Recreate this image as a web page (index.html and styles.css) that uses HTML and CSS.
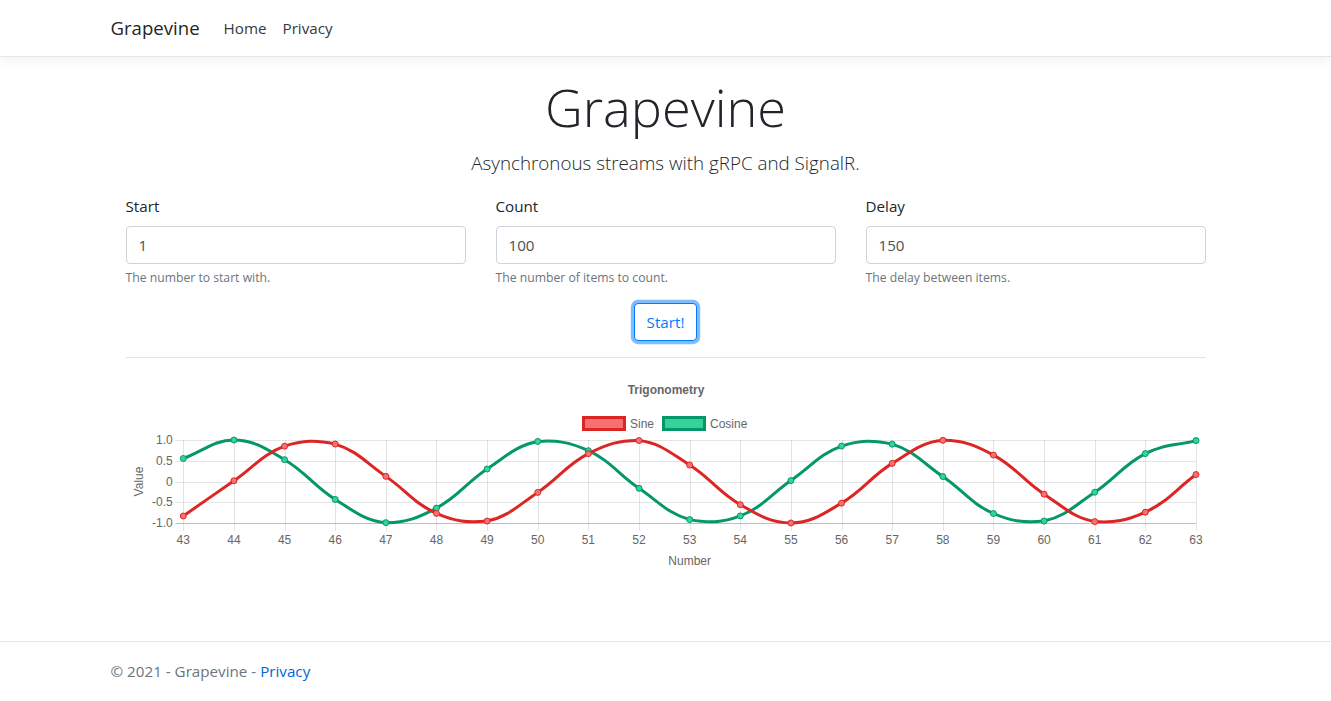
FILE: index.html
```html
<!DOCTYPE html>
<html lang="en">
<head>
<meta charset="utf-8">
<title>Grapevine</title>
<link rel="stylesheet" href="styles.css">
</head>
<body>
<header>
  <nav class="navbar">
    <div class="container nav-inner">
      <a class="brand" href="#">Grapevine</a>
      <ul class="nav-links">
        <li><a class="nav-link" href="#">Home</a></li>
        <li><a class="nav-link" href="#">Privacy</a></li>
      </ul>
    </div>
  </nav>
</header>
<div class="container page">
  <main class="inner">
    <div class="hero">
      <h1 class="display">Grapevine</h1>
      <p class="lead">Asynchronous streams with gRPC and SignalR.</p>
    </div>
    <form class="fields">
      <div class="field">
        <label for="start">Start</label>
        <input id="start" class="form-control" type="text" value="1">
        <small class="form-text">The number to start with.</small>
      </div>
      <div class="field">
        <label for="count">Count</label>
        <input id="count" class="form-control" type="text" value="100">
        <small class="form-text">The number of items to count.</small>
      </div>
      <div class="field">
        <label for="delay">Delay</label>
        <input id="delay" class="form-control" type="text" value="150">
        <small class="form-text">The delay between items.</small>
      </div>
    </form>
    <div class="actions"><button class="btn" type="button">Start!</button></div>
    <hr class="divider">
    <svg id="chart" class="chart" width="1080" height="200" viewBox="0 0 1080 200" xmlns="http://www.w3.org/2000/svg">
      <g id="grid"></g>
      <g class="chart-text">
        <text class="chart-title" x="540" y="20" text-anchor="middle">Trigonometry</text>
        <rect x="457.5" y="43.5" width="41" height="12" fill="#f87171" stroke="#dc2626" stroke-width="3"></rect>
        <text x="504" y="54">Sine</text>
        <rect x="537.5" y="43.5" width="41" height="12" fill="#34d399" stroke="#059669" stroke-width="3"></rect>
        <text x="584" y="54">Cosine</text>
        <text x="17" y="107.5" text-anchor="middle" transform="rotate(-90 17 107.5)">Value</text>
        <text x="563.7" y="191" text-anchor="middle">Number</text>
      </g>
      <g id="labels" class="chart-text"></g>
      <g id="series"></g>
    </svg>
  </main>
</div>
<footer class="footer">
  <div class="container">© 2021 - Grapevine - <a href="#">Privacy</a></div>
</footer>
<script src="app.js"></script>
</body>
</html>
```

FILE: styles.css
```css
* { box-sizing: border-box; }
html { font-size: 16px; }
body {
  margin: 0;
  min-height: 100vh;
  display: flex;
  flex-direction: column;
  font-family: "Open Sans", "Noto Sans", "Liberation Sans", sans-serif;
  font-size: 15.2px;
  line-height: 24px;
  color: #212529;
  background: #fff;
}
a { text-decoration: none; }
.container {
  width: 100%;
  max-width: 1140px;
  margin: 0 auto;
  padding: 0 15px;
}
.navbar {
  border-bottom: 1px solid #e5e5e5;
  box-shadow: 0 .25rem .75rem rgba(0,0,0,.05);
  padding: 8px 0;
  margin-bottom: 16px;
  background: #fff;
}
.nav-inner { display: flex; align-items: center; }
.brand {
  font-size: 18.6px;
  line-height: 30px;
  padding: 5px 0;
  margin-right: 16px;
  color: #212529;
}
.nav-links { display: flex; list-style: none; margin: 0; padding: 0; }
.nav-link { display: block; padding: 8px; color: #343a40; line-height: 24px; }
.page { flex: 1 0 auto; padding-bottom: 16px; }
.inner { padding: 0 15px; }
.hero { text-align: center; }
.display {
  margin: 0 0 8px;
  font-size: 52.3px;
  font-weight: 300;
  line-height: 67px;
  height: 67px;
}
.lead {
  margin: 0 0 16px;
  font-size: 18.8px;
  font-weight: 300;
  line-height: 30px;
  height: 30px;
}
.fields {
  display: grid;
  grid-template-columns: repeat(3, 1fr);
  column-gap: 30px;
  margin: 0;
}
.field { display: flex; flex-direction: column; margin-bottom: 16px; }
.field label { margin-bottom: 8px; line-height: 24px; height: 24px; }
.form-control {
  height: 38px;
  padding: 6px 12px;
  font: inherit;
  font-size: 15.2px;
  color: #495057;
  border: 1px solid #ced4da;
  border-radius: 4px;
  background: #fff;
}
.form-text {
  margin-top: 4px;
  font-size: 12.2px;
  line-height: 19px;
  color: #6c757d;
}
.actions { display: flex; justify-content: center; }
.btn {
  font: inherit;
  font-size: 15.2px;
  line-height: 24px;
  height: 38px;
  padding: 6px 12px;
  color: #007bff;
  background: #fff;
  border: 1px solid #007bff;
  border-radius: 4px;
  box-shadow: 0 0 0 3.2px rgba(0,123,255,.5);
}
.divider {
  margin: 16px 0;
  border: 0;
  border-top: 1px solid rgba(0,0,0,.1);
  height: 0;
}
.chart { display: block; }
.chart-text text, text.chart-title {
  font-family: "Liberation Sans", Arial, sans-serif;
  font-size: 12px;
  fill: #666;
}
.chart-title { font-weight: bold; }
.footer {
  border-top: 1px solid #e5e5e5;
  line-height: 59px;
  color: #6c757d;
  white-space: nowrap;
}
.footer a { color: #0366d6; }
```

FILE: app.js
```js
(function () {
  var NS = "http://www.w3.org/2000/svg";
  var L = 57.3, R = 1070, T = 66, B = 149;
  var N = 21, START = 43;
  function X(i) { return L + i * (R - L) / (N - 1); }
  function Y(v) { return T + (1 - v) / 2 * (B - T); }
  function el(name, attrs, parent, text) {
    var e = document.createElementNS(NS, name);
    for (var k in attrs) e.setAttribute(k, attrs[k]);
    if (text !== undefined) e.textContent = text;
    parent.appendChild(e);
    return e;
  }
  var grid = document.getElementById("grid");
  var labels = document.getElementById("labels");
  var series = document.getElementById("series");
  var gc = "rgba(0,0,0,0.1)";
  for (var i = 0; i < N; i++) {
    var x = Math.round(X(i)) + 0.5;
    el("line", { x1: x, x2: x, y1: T, y2: B + 8, stroke: gc, "stroke-width": 1 }, grid);
    el("text", { x: X(i), y: 170, "text-anchor": "middle" }, labels, String(START + i));
  }
  var ticks = [[1, "1.0"], [0.5, "0.5"], [0, "0"], [-0.5, "-0.5"], [-1, "-1.0"]];
  ticks.forEach(function (t) {
    var y = Math.round(Y(t[0])) + 0.5;
    el("line", { x1: L - 8, x2: R, y1: y, y2: y, stroke: t[0] === -1 ? "rgba(0,0,0,0.25)" : gc, "stroke-width": 1 }, grid);
    el("text", { x: 46.7, y: Y(t[0]) + 4, "text-anchor": "end" }, labels, t[1]);
  });
  function curve(fn) {
    var pts = [];
    for (var i = 0; i < N; i++) pts.push({ x: X(i), y: Y(fn(START + i)) });
    var t = 0.4;
    pts.forEach(function (p, i) {
      var prev = pts[i - 1] || p, next = pts[i + 1] || p;
      var d01 = Math.hypot(p.x - prev.x, p.y - prev.y);
      var d12 = Math.hypot(next.x - p.x, next.y - p.y);
      var s01 = d01 / (d01 + d12), s12 = d12 / (d01 + d12);
      if (isNaN(s01)) s01 = 0;
      if (isNaN(s12)) s12 = 0;
      var fa = t * s01, fb = t * s12;
      p.cp1 = { x: p.x - fa * (next.x - prev.x), y: p.y - fa * (next.y - prev.y) };
      p.cp2 = { x: p.x + fb * (next.x - prev.x), y: p.y + fb * (next.y - prev.y) };
      [p.cp1, p.cp2].forEach(function (c) {
        c.y = Math.max(T, Math.min(B, c.y));
        c.x = Math.max(L, Math.min(R, c.x));
      });
    });
    var d = "M" + pts[0].x + " " + pts[0].y;
    for (var j = 1; j < pts.length; j++) {
      var a = pts[j - 1], b = pts[j];
      d += " C" + a.cp2.x + " " + a.cp2.y + " " + b.cp1.x + " " + b.cp1.y + " " + b.x + " " + b.y;
    }
    return { d: d, pts: pts };
  }
  function draw(fn, line, fill) {
    var c = curve(fn);
    el("path", { d: c.d, fill: "none", stroke: line, "stroke-width": 3, "stroke-linejoin": "round" }, series);
    c.pts.forEach(function (p) {
      el("circle", { cx: p.x, cy: p.y, r: 3, fill: fill, stroke: line, "stroke-width": 1 }, series);
    });
  }
  draw(Math.cos, "#059669", "#34d399");
  draw(Math.sin, "#dc2626", "#f87171");
})();
```
